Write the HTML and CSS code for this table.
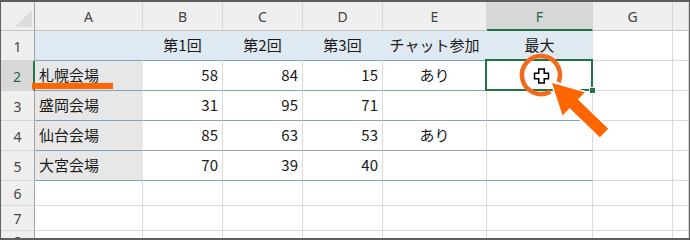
FILE: index.html
```html
<!DOCTYPE html>
<html lang="ja">
<head>
<meta charset="utf-8">
<title>Sheet</title>
<link rel="stylesheet" href="styles.css">
</head>
<body>
<div class="sheet">
  <div class="cell corner"><svg class="corner-tri" width="33" height="28" viewBox="0 0 33 28"><polygon points="14,25 31,25 31,8" fill="#dcdcdc"/></svg></div>
  <div class="cell ch">A</div>
  <div class="cell ch">B</div>
  <div class="cell ch">C</div>
  <div class="cell ch">D</div>
  <div class="cell ch">E</div>
  <div class="cell ch sel">F</div>
  <div class="cell ch">G</div>
  <div class="cell ch last"></div>

  <div class="cell rh">1</div>
  <div class="cell t1"></div>
  <div class="cell t1 ctr">第1回</div>
  <div class="cell t1 ctr">第2回</div>
  <div class="cell t1 ctr">第3回</div>
  <div class="cell t1 ctr">チャット参加</div>
  <div class="cell t1 ctr">最大</div>
  <div class="cell"></div>
  <div class="cell"></div>

  <div class="cell rh sel">2</div>
  <div class="cell lab">札幌会場</div>
  <div class="cell d num">58</div>
  <div class="cell d num">84</div>
  <div class="cell d num">15</div>
  <div class="cell d ctr">あり</div>
  <div class="cell d active"><span class="handle"></span></div>
  <div class="cell"></div>
  <div class="cell"></div>

  <div class="cell rh">3</div>
  <div class="cell lab">盛岡会場</div>
  <div class="cell d num">31</div>
  <div class="cell d num">95</div>
  <div class="cell d num">71</div>
  <div class="cell d ctr"></div>
  <div class="cell d"></div>
  <div class="cell"></div>
  <div class="cell"></div>

  <div class="cell rh">4</div>
  <div class="cell lab">仙台会場</div>
  <div class="cell d num">85</div>
  <div class="cell d num">63</div>
  <div class="cell d num">53</div>
  <div class="cell d ctr">あり</div>
  <div class="cell d"></div>
  <div class="cell"></div>
  <div class="cell"></div>

  <div class="cell rh">5</div>
  <div class="cell lab">大宮会場</div>
  <div class="cell d num">70</div>
  <div class="cell d num">39</div>
  <div class="cell d num">40</div>
  <div class="cell d ctr"></div>
  <div class="cell d"></div>
  <div class="cell"></div>
  <div class="cell"></div>

  <div class="cell rh">6</div>
  <div class="cell"></div><div class="cell"></div><div class="cell"></div><div class="cell"></div><div class="cell"></div><div class="cell"></div><div class="cell"></div><div class="cell"></div>

  <div class="cell rh">7</div>
  <div class="cell"></div><div class="cell"></div><div class="cell"></div><div class="cell"></div><div class="cell"></div><div class="cell"></div><div class="cell"></div><div class="cell"></div>

  <div class="cell rh rh8">8</div>
  <div class="cell"></div><div class="cell"></div><div class="cell"></div><div class="cell"></div><div class="cell"></div><div class="cell"></div><div class="cell"></div><div class="cell"></div>
</div>

<svg class="overlay" width="690" height="240" viewBox="0 0 690 240">
  <rect x="32" y="83" width="81" height="6" fill="#ff6600"/>
  <path d="M550.5 91.45 A19 19 0 1 1 558.6 82.1" fill="none" stroke="#f26a1b" stroke-width="4.5"/>
  <path d="M538.75 69 H544.25 V73.25 H548.5 V78.75 H544.25 V83 H538.75 V78.75 H534.5 V73.25 H538.75 Z" fill="#fff" stroke="#000" stroke-width="1.5" stroke-linejoin="miter"/>
  <polygon points="552,83 584.8,92.3 577.9,99.5 608.2,128.7 599.8,137.3 569.5,108.1 562.6,115.4" fill="#ff6600" stroke="#fff" stroke-width="3" stroke-linejoin="miter" paint-order="stroke"/>
</svg>
</body>
</html>
```

FILE: styles.css
```css
* {
  box-sizing: border-box;
  margin: 0;
  padding: 0;
}

html, body {
  width: 690px;
  height: 240px;
  overflow: hidden;
  background: #ffffff;
}

body {
  position: relative;
  font-family: "Noto Sans CJK JP", "Noto Sans", sans-serif;
}

.sheet {
  width: 690px;
  height: 240px;
  border: 1px solid #5e5e5e;
  border-top-width: 2px;
  border-bottom-width: 2px;
  display: grid;
  grid-template-columns: 34px 108px 80px 80px 80px 104px 106px 80px 1fr;
  grid-template-rows: 29px 30px 30px 30px 30px 30px 25px 25px 1fr;
  overflow: hidden;
}

.cell {
  position: relative;
  border-right: 1px solid #dadada;
  border-bottom: 1px solid #dadada;
  display: flex;
  align-items: center;
  font-size: 15px;
  line-height: 1;
  color: #1a1a1a;
  white-space: nowrap;
  padding-bottom: 3px;
}

.corner {
  background: #efefef;
  border-right-color: #a3a3a3;
  border-bottom-color: #c4c4c4;
  padding: 0;
}

.corner-tri {
  display: block;
}

.ch {
  background: #efefef;
  border-right-color: #d6d6d6;
  border-bottom-color: #c4c4c4;
  justify-content: center;
  font-family: "Noto Sans", sans-serif;
  font-size: 14px;
  color: #444444;
  padding-bottom: 0;
  padding-top: 2px;
}

.ch.sel {
  background: #d8d8d8;
  color: #1e6b41;
  border-bottom: 2px solid #217346;
}

.rh {
  background: #efefef;
  border-right-color: #a3a3a3;
  border-bottom-color: #d6d6d6;
  justify-content: center;
  font-family: "Noto Sans", sans-serif;
  font-size: 14px;
  color: #444444;
  padding-bottom: 0;
  padding-top: 2px;
}

.rh.sel {
  background: #d8d8d8;
  color: #1e6b41;
  border-right: 2px solid #217346;
}

.rh8 {
  align-items: flex-start;
  padding-top: 4px;
}

.t1 {
  background: #dfe9f1;
  border-right-color: #dfe9f1;
  border-bottom-color: #7da5c2;
  padding-bottom: 2px;
}

.lab {
  background: #e7e7e7;
  border-right-color: #e7e7e7;
  border-bottom-color: #7da5c2;
  padding-left: 4px;
}

.d {
  background: #ffffff;
  border-bottom-color: #7da5c2;
}

.num {
  justify-content: flex-end;
  padding-right: 4px;
}

.ctr {
  justify-content: center;
}

.active::after {
  content: "";
  position: absolute;
  top: -2px;
  left: -2px;
  right: -1px;
  bottom: -1px;
  border: 2px solid #217346;
}

.handle {
  position: absolute;
  right: -4px;
  bottom: -4px;
  width: 7px;
  height: 7px;
  background: #217346;
  border: 1px solid #ffffff;
  z-index: 2;
}

.overlay {
  position: absolute;
  left: 0;
  top: 0;
  pointer-events: none;
}
```
